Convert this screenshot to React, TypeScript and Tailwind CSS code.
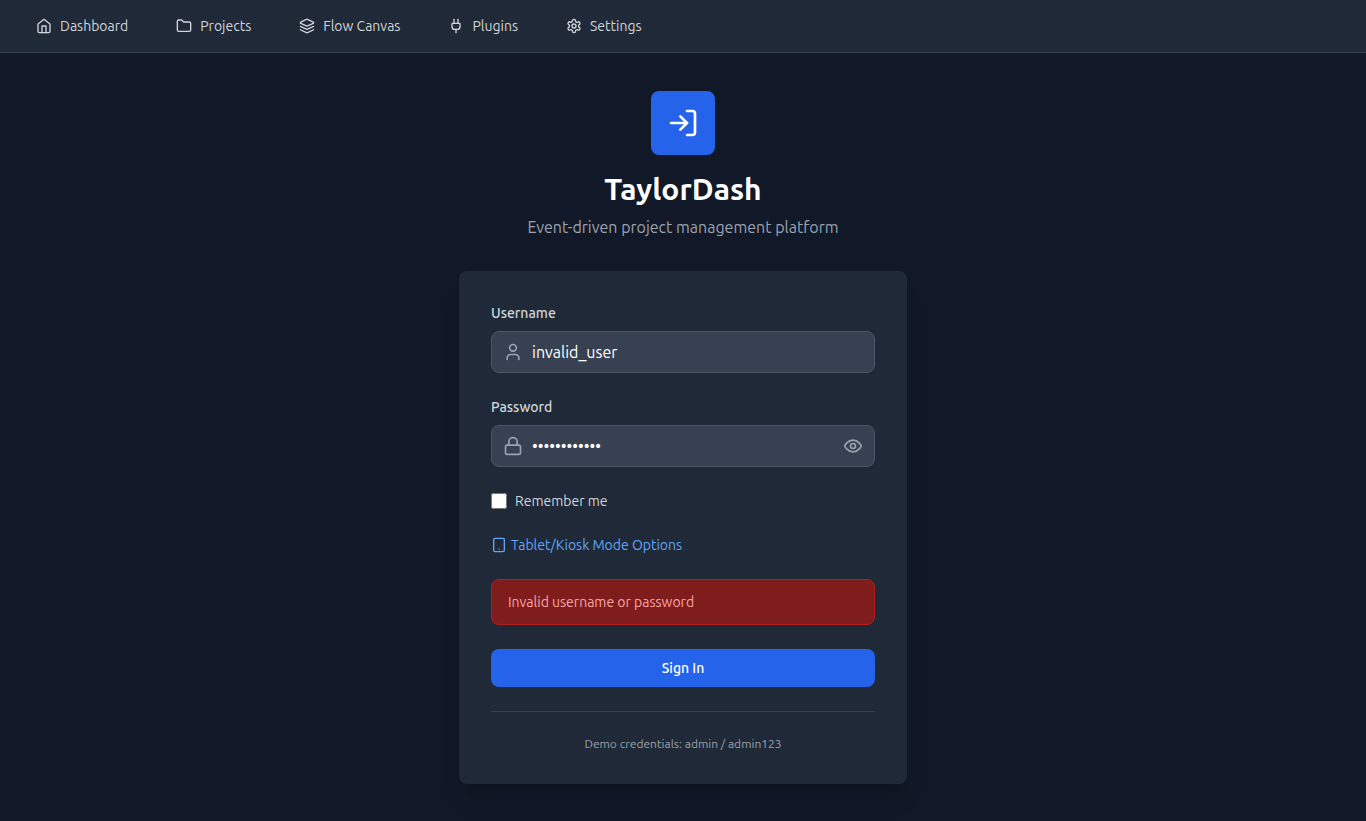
import { useState } from 'react';
import type { ReactNode } from 'react';
import { EyeOff, Folder, Lock, LogIn, Plug, Tablet, User } from 'lucide-react';

type IconProps = { size?: number };

function Icon({ size = 24, children }: IconProps & { children: ReactNode }) {
  return (
    <svg
      width={size}
      height={size}
      viewBox="0 0 24 24"
      fill="none"
      stroke="currentColor"
      strokeWidth={2}
      strokeLinecap="round"
      strokeLinejoin="round"
      aria-hidden="true"
    >
      {children}
    </svg>
  );
}

function HomeIcon({ size }: IconProps) {
  return (
    <Icon size={size}>
      <path d="m3 9 9-7 9 7v11a2 2 0 0 1-2 2H5a2 2 0 0 1-2-2z" />
      <polyline points="9 22 9 12 15 12 15 22" />
    </Icon>
  );
}

function LayersIcon({ size }: IconProps) {
  return (
    <Icon size={size}>
      <path d="m12.83 2.18a2 2 0 0 0-1.66 0L2.6 6.08a1 1 0 0 0 0 1.83l8.58 3.91a2 2 0 0 0 1.66 0l8.58-3.9a1 1 0 0 0 0-1.83Z" />
      <path d="m22 17.65-9.17 4.16a2 2 0 0 1-1.66 0L2 17.65" />
      <path d="m22 12.65-9.17 4.16a2 2 0 0 1-1.66 0L2 12.65" />
    </Icon>
  );
}

function EyeIcon({ size }: IconProps) {
  return (
    <Icon size={size}>
      <path d="M2 12s3-7 10-7 10 7 10 7-3 7-10 7-10-7-10-7Z" />
      <circle cx="12" cy="12" r="3" />
    </Icon>
  );
}

function SettingsIcon({ size }: IconProps) {
  return (
    <Icon size={size}>
      <path d="M12.22 2h-.44a2 2 0 0 0-2 2v.18a2 2 0 0 1-1 1.73l-.43.25a2 2 0 0 1-2 0l-.15-.08a2 2 0 0 0-2.73.73l-.22.38a2 2 0 0 0 .73 2.73l.15.1a2 2 0 0 1 1 1.72v.51a2 2 0 0 1-1 1.74l-.15.09a2 2 0 0 0-.73 2.73l.22.38a2 2 0 0 0 2.73.73l.15-.08a2 2 0 0 1 2 0l.43.25a2 2 0 0 1 1 1.73V20a2 2 0 0 0 2 2h.44a2 2 0 0 0 2-2v-.18a2 2 0 0 1 1-1.73l.43-.25a2 2 0 0 1 2 0l.15.08a2 2 0 0 0 2.73-.73l.22-.39a2 2 0 0 0-.73-2.73l-.15-.08a2 2 0 0 1-1-1.74v-.5a2 2 0 0 1 1-1.74l.15-.09a2 2 0 0 0 .73-2.73l-.22-.38a2 2 0 0 0-2.73-.73l-.15.08a2 2 0 0 1-2 0l-.43-.25a2 2 0 0 1-1-1.73V4a2 2 0 0 0-2-2z" />
      <circle cx="12" cy="12" r="3" />
    </Icon>
  );
}

const navItems = [
  { label: 'Dashboard', icon: HomeIcon },
  { label: 'Projects', icon: Folder },
  { label: 'Flow Canvas', icon: LayersIcon },
  { label: 'Plugins', icon: Plug },
  { label: 'Settings', icon: SettingsIcon },
];

const inputClass =
  'block w-full rounded-lg border border-[#4b5563] bg-[#374151] py-2 pl-10 text-base text-white outline-none focus:border-[#3b82f6]';

function NavBar() {
  return (
    <nav className="flex flex-wrap gap-x-4 border-b border-[#374151] bg-[#1f2937] px-5">
      {navItems.map(({ label, icon: NavIcon }) => (
        <a key={label} href="#" className="flex items-center gap-2 p-4 text-sm text-[#d1d5db] hover:text-white">
          <NavIcon size={16} />
          {label}
        </a>
      ))}
    </nav>
  );
}

function Field({ id, label, icon, children }: { id: string; label: string; icon: ReactNode; children: ReactNode }) {
  return (
    <div>
      <label htmlFor={id} className="mb-2 block text-sm font-medium text-[#d1d5db]">
        {label}
      </label>
      <div className="relative">
        <div className="pointer-events-none absolute inset-y-0 left-0 flex items-center pl-3 text-[#9ca3af]">{icon}</div>
        {children}
      </div>
    </div>
  );
}

export default function App() {
  const [username, setUsername] = useState('invalid_user');
  const [password, setPassword] = useState('invalid_pass');
  const [visible, setVisible] = useState(false);

  return (
    <div className="flex min-h-screen flex-col bg-[#111827] font-[Ubuntu,'Noto_Sans',sans-serif] text-white">
      <NavBar />
      <main className="flex flex-1 items-center justify-center px-4">
        <div className="w-full max-w-md">
          <header className="mb-8 text-center">
            <div className="mx-auto mb-4 flex size-16 items-center justify-center rounded-lg bg-[#2563eb]">
              <LogIn size={32} />
            </div>
            <h1 className="text-3xl font-bold">TaylorDash</h1>
            <p className="mt-2 text-base text-[#9ca3af]">Event-driven project management platform</p>
          </header>

          <div className="rounded-lg bg-[#1f2937] p-8 shadow-xl">
            <form className="flex flex-col gap-6" onSubmit={(e) => e.preventDefault()}>
              <Field id="username" label="Username" icon={<User size={20} />}>
                <input
                  id="username"
                  type="text"
                  value={username}
                  onChange={(e) => setUsername(e.target.value)}
                  className={`${inputClass} pr-3`}
                />
              </Field>

              <Field id="password" label="Password" icon={<Lock size={20} />}>
                <input
                  id="password"
                  type={visible ? 'text' : 'password'}
                  value={password}
                  onChange={(e) => setPassword(e.target.value)}
                  className={`${inputClass} pr-10`}
                />
                <button
                  type="button"
                  aria-label="Show password"
                  onClick={() => setVisible(!visible)}
                  className="absolute inset-y-0 right-0 flex items-center pr-3 text-[#9ca3af]"
                >
                  {visible ? <EyeOff size={20} /> : <EyeIcon size={20} />}
                </button>
              </Field>

              <div className="flex items-center gap-2">
                <input id="remember" type="checkbox" className="size-4" />
                <label htmlFor="remember" className="text-sm text-[#d1d5db]">
                  Remember me
                </label>
              </div>

              <button type="button" className="flex items-center gap-1 self-start text-sm text-[#60a5fa]">
                <Tablet size={16} />
                Tablet/Kiosk Mode Options
              </button>

              <div role="alert" className="rounded-lg border border-[#b91c1c] bg-[#7f1d1d] px-4 py-3 text-sm text-[#fca5a5]">
                Invalid username or password
              </div>

              <button
                type="submit"
                className="w-full rounded-lg border border-transparent bg-[#2563eb] px-4 py-2 text-sm font-medium text-white"
              >
                Sign In
              </button>
            </form>

            <div className="mt-6 border-t border-[#374151] pt-6 text-center text-xs text-[#9ca3af]">
              Demo credentials: admin / admin123
            </div>
          </div>
        </div>
      </main>
    </div>
  );
}
